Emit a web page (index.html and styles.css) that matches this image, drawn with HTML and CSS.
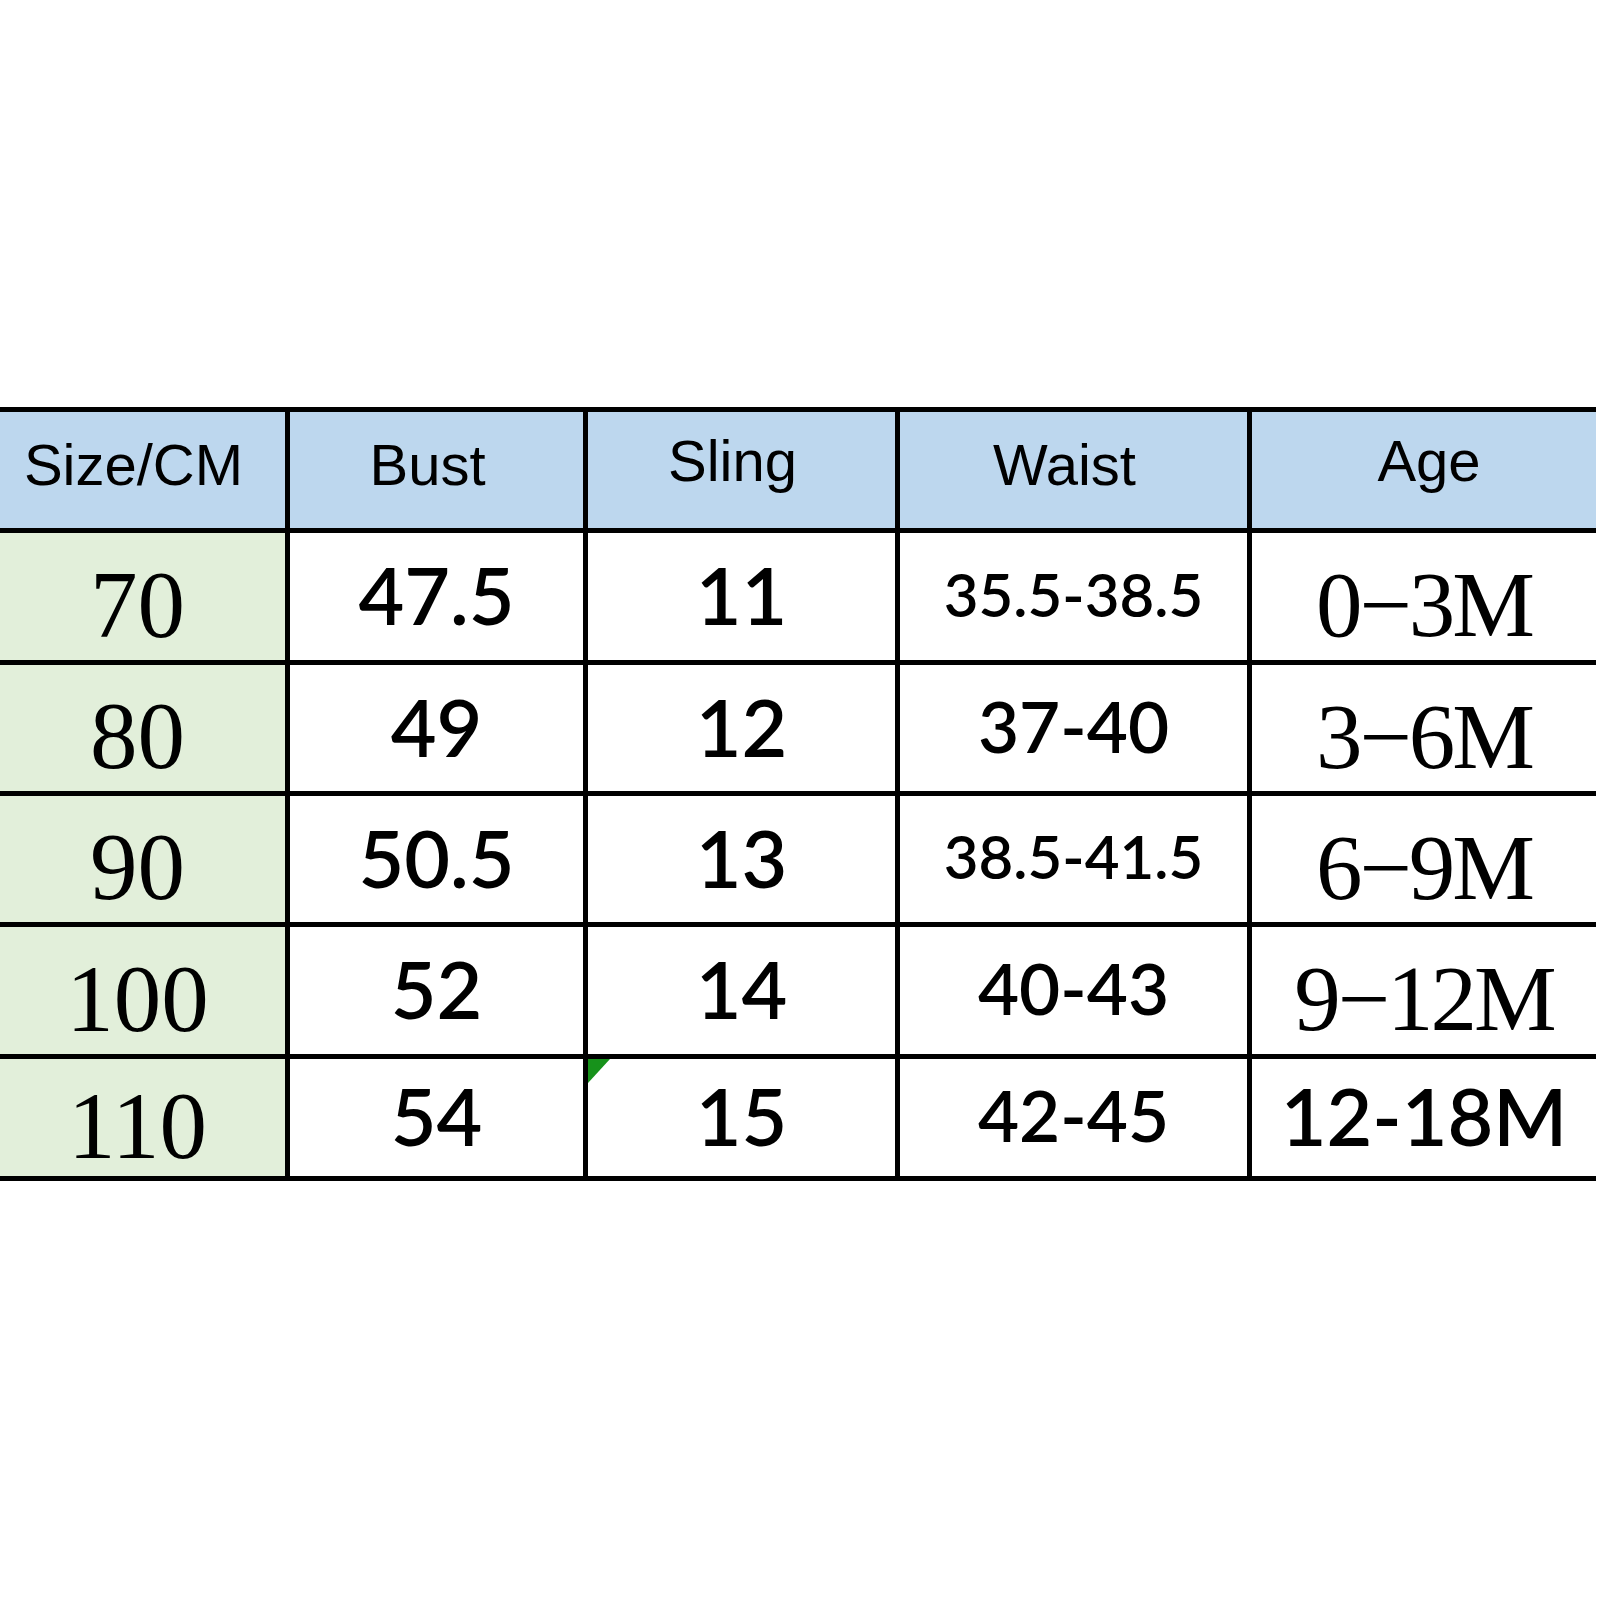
FILE: index.html
```html
<!DOCTYPE html>
<html lang="en">
<head>
<meta charset="utf-8">
<title>Size chart</title>
<link rel="stylesheet" href="styles.css">
</head>
<body>
<div class="page">
  <div class="chart">
    <div class="cell head">Size/CM</div>
    <div class="cell head">Bust</div>
    <div class="cell head head-up">Sling</div>
    <div class="cell head">Waist</div>
    <div class="cell head head-up head-age">Age</div>

    <div class="cell size serif">70</div>
    <div class="cell num">47.5</div>
    <div class="cell num">11</div>
    <div class="cell num small">35.5-38.5</div>
    <div class="cell age serif">0−3M</div>

    <div class="cell size serif">80</div>
    <div class="cell num">49</div>
    <div class="cell num">12</div>
    <div class="cell num mid">37-40</div>
    <div class="cell age serif">3−6M</div>

    <div class="cell size serif">90</div>
    <div class="cell num">50.5</div>
    <div class="cell num">13</div>
    <div class="cell num small">38.5-41.5</div>
    <div class="cell age serif">6−9M</div>

    <div class="cell size serif">100</div>
    <div class="cell num">52</div>
    <div class="cell num">14</div>
    <div class="cell num mid">40-43</div>
    <div class="cell age serif">9−12M</div>

    <div class="cell size serif">110</div>
    <div class="cell num">54</div>
    <div class="cell num flagged">15<svg class="flag" width="22" height="24" viewBox="0 0 22 24"><polygon points="0,0 22,0 0,24" fill="#17921b"/></svg></div>
    <div class="cell num mid">42-45</div>
    <div class="cell num">12-18M</div>
  </div>
</div>
</body>
</html>
```

FILE: styles.css
```css
html, body {
  margin: 0;
  padding: 0;
  background: #ffffff;
}

.page {
  width: 1600px;
  height: 1600px;
  padding-top: 407px;
  box-sizing: border-box;
}

.chart {
  width: 1596px;
  display: grid;
  grid-template-columns: 285px 293px 307px 347px 344px;
  grid-template-rows: 116px 127px 126px 126px 127px 117px;
  gap: 5px;
  padding: 5px 0;
  background: #000000;
}

.cell {
  background: #ffffff;
  color: #000000;
  display: flex;
  align-items: center;
  justify-content: center;
  white-space: nowrap;
  box-sizing: border-box;
}

.head {
  background: #bdd7ee;
  font-family: "Liberation Sans", Arial, sans-serif;
  font-size: 58px;
  padding-bottom: 12px;
  padding-right: 18px;
}

.head-up {
  padding-bottom: 20px;
}

.head-age {
  padding-right: 0;
  padding-left: 10px;
}

.num {
  font-family: Lato, "DejaVu Sans Condensed", sans-serif;
  font-weight: 600;
  font-size: 79px;
  padding-bottom: 4px;
}

.num.small {
  font-size: 60px;
  padding-bottom: 6px;
}

.num.mid {
  font-size: 71px;
  padding-bottom: 6px;
}

.serif {
  font-family: "Liberation Serif", "Times New Roman", serif;
  padding-top: 16px;
}

.size {
  background: #e2efda;
  font-size: 95px;
  padding-right: 10px;
}

.age {
  font-size: 93px;
  letter-spacing: -3px;
}

.flagged {
  position: relative;
}

.flag {
  position: absolute;
  left: 0;
  top: 0;
  display: block;
}
```
